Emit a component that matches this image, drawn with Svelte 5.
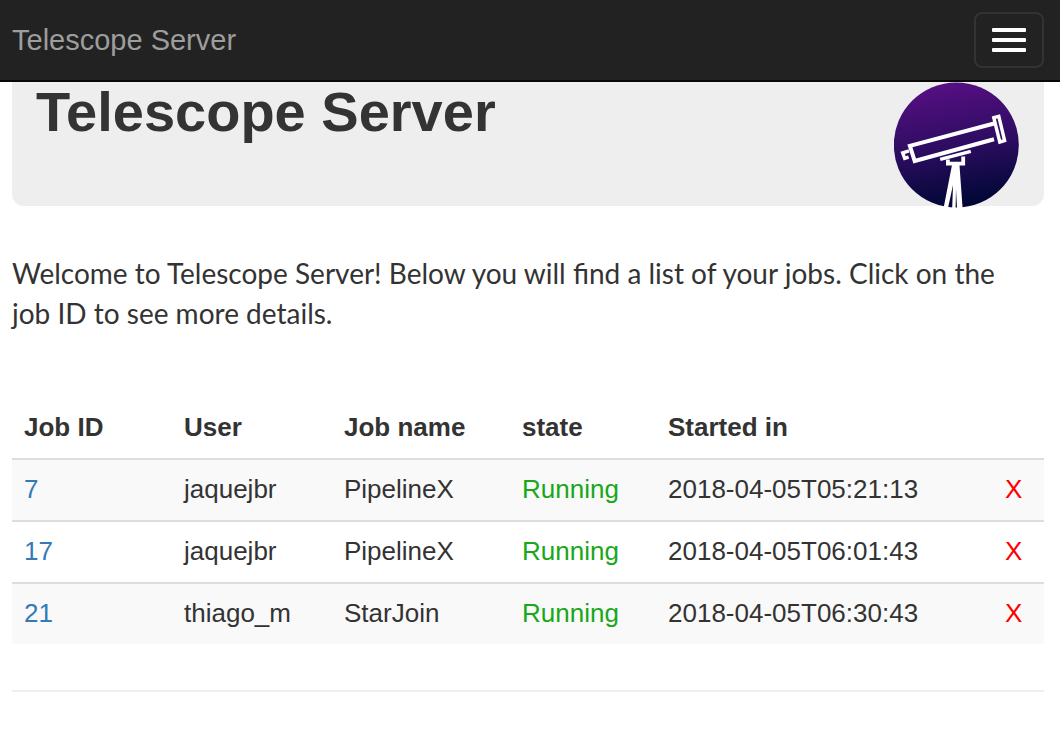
<script>
  const jobs = [
    { id: 7, user: 'jaquejbr', name: 'PipelineX', state: 'Running', started: '2018-04-05T05:21:13' },
    { id: 17, user: 'jaquejbr', name: 'PipelineX', state: 'Running', started: '2018-04-05T06:01:43' },
    { id: 21, user: 'thiago_m', name: 'StarJoin', state: 'Running', started: '2018-04-05T06:30:43' }
  ];
</script>

<nav class="navbar">
  <a class="brand" href="#top">Telescope Server</a>
  <button class="toggle" type="button" aria-label="Toggle navigation">
    <span class="bar"></span>
    <span class="bar"></span>
    <span class="bar"></span>
  </button>
</nav>

<main class="container">
  <header class="hero">
    <h1>Telescope Server</h1>
    <svg class="logo" viewBox="0 0 126 126" aria-hidden="true">
      <defs>
        <linearGradient id="sky" x1="0.42" y1="0" x2="0.58" y2="1">
          <stop offset="0" stop-color="#560f82" />
          <stop offset="0.5" stop-color="#2e0c62" />
          <stop offset="0.92" stop-color="#05083a" />
          <stop offset="1" stop-color="#030633" />
        </linearGradient>
      </defs>
      <circle cx="62.3" cy="63" r="62.5" fill="url(#sky)" />
      <g fill="none" stroke="#fff" stroke-width="4">
        <path d="M101 41.2 15.9 63.8 20.7 79 100 57.2" />
        <path d="M15 68.8 8.7 70.8 10.7 76.4 14.6 75.2" stroke-width="3.4" />
        <path d="M99.8 35.6 104.8 34.3 110.6 58.6 105.8 60Z" stroke-width="3.4" />
        <path d="M46.2 77.4 76.8 69.4" stroke-width="3.4" />
        <path d="M53.9 77.6V81.6H69.2V74.6" stroke-width="3.8" />
      </g>
      <path d="M58.2 82H65.4L68.6 126H63L62 107L61.6 126H58.2L59 103L54 126H49.6Z" fill="#fff" />
    </svg>
  </header>

  <p class="intro">
    Welcome to Telescope Server! Below you will find a list of your jobs. Click on the job ID to see more details.
  </p>

  <table>
    <colgroup>
      <col class="c-id" />
      <col class="c-user" />
      <col class="c-name" />
      <col class="c-state" />
      <col />
      <col class="c-remove" />
    </colgroup>
    <thead>
      <tr>
        <th scope="col">Job ID</th>
        <th scope="col">User</th>
        <th scope="col">Job name</th>
        <th scope="col">state</th>
        <th scope="col">Started in</th>
        <td></td>
      </tr>
    </thead>
    <tbody>
      {#each jobs as job (job.id)}
        <tr>
          <td><a href="#job-{job.id}">{job.id}</a></td>
          <td>{job.user}</td>
          <td>{job.name}</td>
          <td class="running">{job.state}</td>
          <td>{job.started}</td>
          <td><button class="remove" type="button" aria-label="X, remove job {job.id}">X</button></td>
        </tr>
      {/each}
    </tbody>
  </table>

  <hr />
</main>

<style>
  :global(body) {
    margin: 0;
    background: #fff;
    color: #333;
    font-family: "Liberation Sans", Arial, sans-serif;
    font-size: 26px;
    line-height: 36px;
  }

  .navbar {
    display: flex;
    align-items: center;
    justify-content: space-between;
    padding: 12px 16px 12px 12px;
    background: #222;
    border-bottom: 2px solid #080808;
  }

  .brand {
    color: #9d9d9d;
    font-size: 29px;
    text-decoration: none;
  }

  .toggle {
    display: flex;
    flex-direction: column;
    gap: 6px;
    padding: 14px 16px;
    background: transparent;
    border: 2px solid #333;
    border-radius: 8px;
  }

  .bar {
    width: 34px;
    height: 4px;
    border-radius: 1px;
    background: #fff;
  }

  .container {
    padding: 0 16px 36px 12px;
  }

  .hero {
    display: flex;
    align-items: flex-start;
    justify-content: space-between;
    padding: 0 24px;
    background: #eee;
    border-radius: 0 0 12px 12px;
  }

  h1 {
    margin: 0;
    font-size: 56px;
    font-weight: 700;
    line-height: 60px;
  }

  .logo {
    flex: none;
    width: 126px;
    height: 126px;
    margin-bottom: -2px;
  }

  .intro {
    margin: 47px 0 65px;
    padding-right: 24px;
    font-family: Lato, sans-serif;
    font-size: 28px;
    line-height: 40px;
  }

  table {
    width: 100%;
    table-layout: fixed;
    border-collapse: separate;
    border-spacing: 0;
  }

  .c-id,
  .c-user {
    width: 160px;
  }

  .c-name {
    width: 178px;
  }

  .c-state {
    width: 146px;
  }

  .c-remove {
    width: 51px;
  }

  th,
  td {
    padding: 11px 12px 13px;
    text-align: left;
  }

  tbody td {
    border-top: 2px solid #ddd;
  }

  tbody tr:nth-child(odd) {
    background: #f9f9f9;
  }

  td a {
    color: #337ab7;
    text-decoration: none;
  }

  .running {
    color: #18a818;
  }

  .remove {
    display: block;
    padding: 0;
    border: 0;
    background: none;
    color: #f00;
    font: inherit;
  }

  hr {
    margin: 46px 0 0;
    border: 0;
    border-top: 2px solid #eee;
  }
</style>
